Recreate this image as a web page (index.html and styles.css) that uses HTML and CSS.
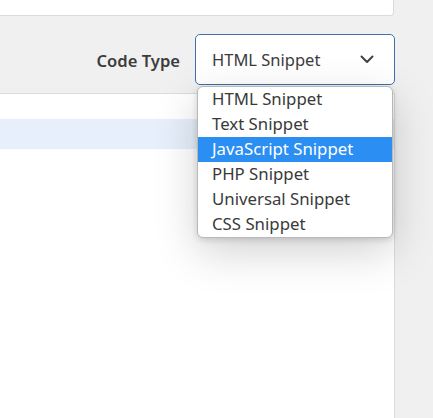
FILE: index.html
```html
<!DOCTYPE html>
<html lang="en">
<head>
<meta charset="utf-8">
<title>Code Type</title>
<link rel="stylesheet" href="styles.css">
</head>
<body>
<div class="page">
  <div class="top-card"></div>
  <div class="header">
    <label class="label">Code Type</label>
    <div class="select">
      <span class="select-value">HTML Snippet</span>
      <svg class="chevron" width="14" height="9" viewBox="0 0 14 9"><path d="M1.5 1.5 L7 7 L12.5 1.5" fill="none" stroke="#3c434a" stroke-width="2" stroke-linecap="round" stroke-linejoin="round"/></svg>
    </div>
  </div>
  <div class="panel">
    <div class="row-blank"></div>
    <div class="row-active"></div>
  </div>
  <ul class="dropdown">
    <li>HTML Snippet</li>
    <li>Text Snippet</li>
    <li class="selected">JavaScript Snippet</li>
    <li>PHP Snippet</li>
    <li>Universal Snippet</li>
    <li>CSS Snippet</li>
  </ul>
</div>
</body>
</html>
```
FILE: styles.css
```css
html, body {
  margin: 0;
  padding: 0;
  height: 100%;
}
body {
  background: #f0f0f1;
  font-family: "Noto Sans", "Open Sans", sans-serif;
  color: #3c434a;
  overflow: hidden;
}
.page {
  position: relative;
  height: 418px;
  display: flex;
  flex-direction: column;
}
.top-card {
  width: 394px;
  height: 16px;
  box-sizing: border-box;
  background: #fff;
  border-right: 1px solid #dcdcde;
  border-bottom: 1px solid #dcdcde;
  border-bottom-right-radius: 4px;
}
.header {
  height: 77px;
  box-sizing: border-box;
  display: flex;
  align-items: center;
  justify-content: flex-end;
  padding: 10px 38px 0 0;
  gap: 15px;
}
.label {
  font-size: 16.6px;
  font-weight: 600;
  color: #3c3c3c;
  margin-top: 2px;
}
.select {
  width: 200px;
  height: 51px;
  box-sizing: border-box;
  border: 1px solid #3e72a8;
  border-radius: 5px;
  background: #fff;
  display: flex;
  align-items: center;
  justify-content: space-between;
  padding: 0 20px 0 16px;
}
.select-value {
  font-size: 16.5px;
  color: #3c3c3c;
}
.chevron {
  display: block;
}
.panel {
  flex: 1;
  width: 395px;
  box-sizing: border-box;
  background: #fff;
  border-top: 1px solid #dcdcde;
  border-right: 1px solid #dcdcde;
}
.row-blank {
  height: 25px;
}
.row-active {
  height: 30px;
  background: #e6effb;
}
.dropdown {
  position: absolute;
  left: 197px;
  top: 86px;
  width: 196px;
  margin: 0;
  padding: 0;
  list-style: none;
  background: #fff;
  border: 1px solid #b8b8b8;
  box-sizing: border-box;
  border-radius: 6px;
  overflow: hidden;
  box-shadow: 0 14px 44px rgba(0, 0, 0, 0.18), 0 2px 6px rgba(0, 0, 0, 0.14);
}
.dropdown li {
  height: 25px;
  line-height: 24px;
  padding-left: 14px;
  font-size: 16.8px;
  color: #3a3a3a;
  white-space: nowrap;
}
.dropdown li.selected {
  background: #2b8ef2;
  color: #fff;
}
```
